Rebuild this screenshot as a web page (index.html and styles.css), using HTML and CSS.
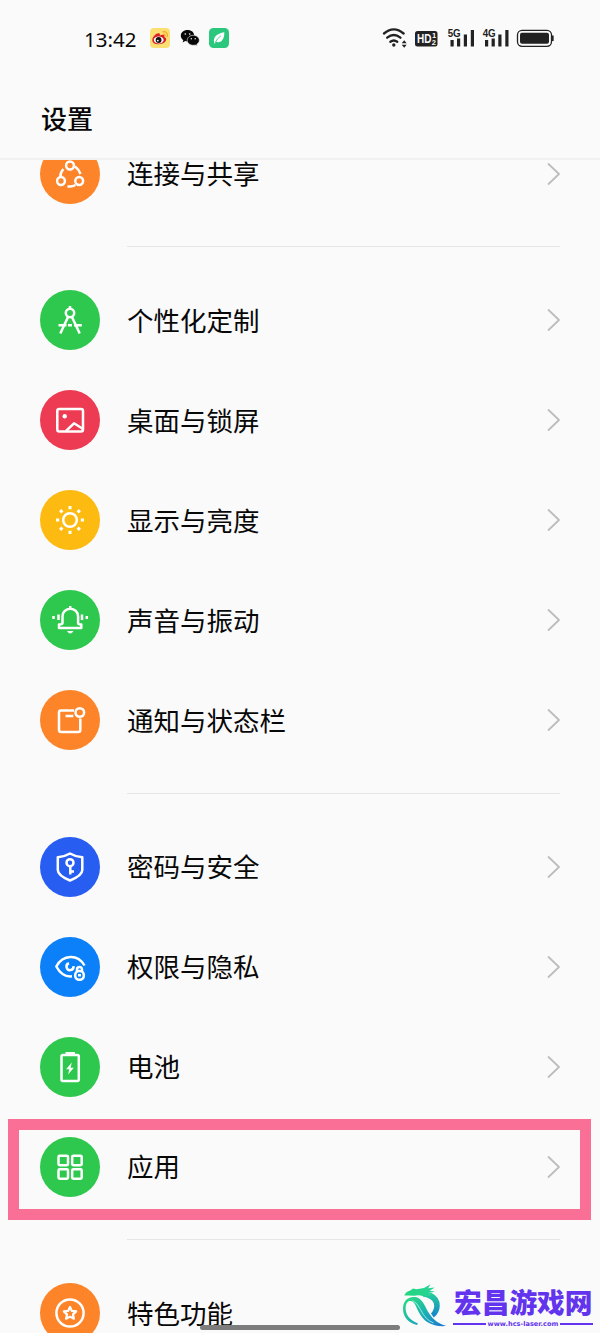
FILE: index.html
```html
<!DOCTYPE html>
<html lang="zh-CN">
<head>
<meta charset="utf-8">
<title>设置</title>
<link rel="stylesheet" href="styles.css">
</head>
<body>
<div class="phone">
  <header class="header">
    <div class="status">
      <span class="time">13:42</span>
      <svg class="app-weibo" width="20" height="20" viewBox="0 0 20 20">
        <rect width="20" height="20" rx="4" fill="#fcdf72"/>
        <path d="M2.300 12.100C2.500 8 7.500 4 9.500 5.600q.7.600.3 1.800c3-1.400 5.400-.6 4.500 1.700 2 .8 2.500 2.300 1.400 4-2.800 4.300-13.500 4.600-13.400-1z" fill="#d91f27"/>
        <ellipse cx="8.700" cy="12" rx="4.900" ry="3.400" fill="#fff"/>
        <circle cx="8.600" cy="12" r="2.900" fill="#111"/><circle cx="7.800" cy="12.600" r=".9" fill="#fff"/>
        <path d="M13 3.800c3-.6 5.300 1.900 4.300 4.800M13.400 6.200c1.300-.2 2.100.6 1.800 1.800" fill="none" stroke="#f5a832" stroke-width="1.200" stroke-linecap="round"/>
      </svg>
      <svg class="app-wechat" width="20" height="18" viewBox="0 0 20 18">
        <path d="M7.500 1C3.500 1 .8 3.500.8 6.700c0 1.900 1 3.400 2.500 4.500l-.7 2.200 2.600-1.300q1.200.4 2.600.3C11.500 12.400 14.200 10 14.200 6.700S11.500 1 7.500 1z" fill="#080808"/>
        <path d="M13.200 6.300c-3.300 0-6 2.200-6 5s2.700 5 6 5q1.100 0 2.100-.3l2 1.100-.5-1.900c1.500-.9 2.500-2.300 2.500-3.900 0-2.800-2.700-5-6.100-5z" fill="#080808" stroke="#fafafa" stroke-width=".6"/>
        <g fill="#fafafa"><circle cx="5.300" cy="5" r=".8"/><circle cx="9.700" cy="5" r=".8"/><circle cx="11.300" cy="9.800" r=".7"/><circle cx="15.200" cy="9.800" r=".7"/></g>
      </svg>
      <svg class="app-leaf" width="20" height="20" viewBox="0 0 20 20">
        <rect width="20" height="20" rx="4.500" fill="#2bc77d"/>
        <path d="M5.300 15C3.600 9.500 7.500 5.300 15.300 4.200c.3 6.300-2.700 11.500-8.600 9.500l-.9 2.400z" fill="#fff"/>
        <path d="M6.200 14.500Q8 10.500 12 7.700" stroke="#2bc77d" fill="none" stroke-width=".8"/>
      </svg>
      <svg class="system" width="175" height="24" viewBox="382 26 175 24">
        <g fill="none" stroke="#222" stroke-width="2.300" stroke-linecap="round">
          <path d="M384 33.500q9.800-8.300 19.600 0M387.200 37.700q6.600-5.300 13.200 0M390.400 41.700q3.400-2.500 6.800 0"/>
        </g>
        <circle cx="393.800" cy="45" r="1.700" fill="#222"/>
        <path d="M401.700 43.200l2.500-3 2.500 3zM401.700 44.700l2.500 3 2.500-3z" fill="#222"/>
        <rect x="415" y="31" width="22.500" height="15.500" rx="2.500" fill="#222"/>
        <text x="417" y="43" class="hd" textLength="14.500" lengthAdjust="spacingAndGlyphs">HD</text>
        <text x="432" y="38.300" class="hd-sub">1</text><text x="431.800" y="45.300" class="hd-sub">2</text>
        <text x="447.700" y="37.200" class="net" textLength="13" lengthAdjust="spacingAndGlyphs">5G</text>
        <text x="482.700" y="37.200" class="net" textLength="13" lengthAdjust="spacingAndGlyphs">4G</text>
        <path d="M450.500 40h3.200v6.500h-3.200zM457 38.500h3.200v8H457zM463.800 34.500h3.200v12h-3.200zM470.800 30h3.200v16.500h-3.200zM485 40h3.200v6.500H485zM491.600 38.500h3.200v8h-3.200zM498.300 34.500h3.200v12h-3.200zM505.300 30h3.200v16.500h-3.200z" fill="#222"/>
        <rect x="517.500" y="30.300" width="34" height="16" rx="4.500" fill="none" stroke="#222" stroke-width="1.300"/>
        <rect x="520" y="32.800" width="29" height="11" rx="2" fill="#222"/><path d="M552.800 35.500v5.500" stroke="#222" stroke-width="1.700"/>
      </svg>
    </div>
    <h1 class="title">设置</h1>
  </header>

  <main class="list">
    <div class="row">
      <span class="disc orange"><svg class="icon" viewBox="0 0 60 60"><circle cx="30" cy="21.500" r="3.900"/><circle cx="21" cy="37" r="3.900"/><circle cx="39.200" cy="37" r="3.900"/><path d="M35 22.500q4 3 5.500 7.500M23.400 25q-3.300 3.700-3 8M27.500 42.300q4.400 1 7.900-1.300"/></svg></span>
      <span class="label">连接与共享</span><svg class="chevron" viewBox="0 0 14 24"><path d="M1.500 2 12 12 1.500 22"/></svg>
    </div>
    <div class="divider"></div>
    <div class="row">
      <span class="disc green"><svg class="icon" viewBox="0 0 60 60"><circle cx="30" cy="23" r="4.200"/><path d="M30 16v2M28 27l-7.700 16.500M32 27l7.700 16.500M18.500 35.300h8M28 35.300h4M34 35.300h7.800"/></svg></span>
      <span class="label">个性化定制</span><svg class="chevron" viewBox="0 0 14 24"><path d="M1.500 2 12 12 1.500 22"/></svg>
    </div>
    <div class="row">
      <span class="disc red"><svg class="icon" viewBox="0 0 60 60"><rect x="17.300" y="19" width="25.700" height="22.500" rx="2"/><path d="M26 41l8-7.700 9 5.700"/><circle cx="24.700" cy="26.300" r="2.200" class="solid"/></svg></span>
      <span class="label">桌面与锁屏</span><svg class="chevron" viewBox="0 0 14 24"><path d="M1.500 2 12 12 1.500 22"/></svg>
    </div>
    <div class="row">
      <span class="disc yellow"><svg class="icon" viewBox="0 0 60 60"><circle cx="30" cy="30" r="6.800"/><path class="rays" d="M30 16v3.200M30 40.800V44M16 30h3.200M40.800 30H44M20.100 20.100l2.300 2.300M37.600 37.600l2.300 2.300M20.100 39.900l2.300-2.300M37.600 22.400l2.300-2.300"/></svg></span>
      <span class="label">显示与亮度</span><svg class="chevron" viewBox="0 0 14 24"><path d="M1.500 2 12 12 1.500 22"/></svg>
    </div>
    <div class="row">
      <span class="disc green"><svg class="icon" viewBox="0 0 60 60"><path d="M22.500 33v-6.500a7.800 7.800 0 0 1 15.600 0V33q0 1.400 3.200 1.600v3.400H19v-3.400q3.500-.2 3.500-1.600zM30.200 16v2M18.500 24.500v5.500M42 24.500v5.500M13.500 26v3M46.800 26v3"/><path class="solid" d="M27 41h6.500q-3.200 5-6.500 0z"/></svg></span>
      <span class="label">声音与振动</span><svg class="chevron" viewBox="0 0 14 24"><path d="M1.500 2 12 12 1.500 22"/></svg>
    </div>
    <div class="row">
      <span class="disc orange"><svg class="icon" viewBox="0 0 60 60"><path d="M34 20.500H21q-2 0-2 2v17.200q0 2.300 2.300 2.300h17q2 0 2-2V28.500M25.500 26h7.800"/><circle cx="39.800" cy="22.500" r="4.300"/></svg></span>
      <span class="label">通知与状态栏</span><svg class="chevron" viewBox="0 0 14 24"><path d="M1.500 2 12 12 1.500 22"/></svg>
    </div>
    <div class="divider"></div>
    <div class="row">
      <span class="disc indigo"><svg class="icon" viewBox="0 0 60 60"><path d="M30 16.500q6 3.500 12.300 3.700V33q0 5.500-12.300 10.500Q17.800 38.500 17.800 33V20.200Q24 20 30 16.500z"/><circle cx="30" cy="25.700" r="3.500"/><path d="M30.300 29.500v8M31 34.500h3"/></svg></span>
      <span class="label">密码与安全</span><svg class="chevron" viewBox="0 0 14 24"><path d="M1.500 2 12 12 1.500 22"/></svg>
    </div>
    <div class="row">
      <span class="disc blue"><svg class="icon" viewBox="0 0 60 60"><path d="M32 39.300C25 40 19.500 35.500 16.300 29.500 23 17 38 17 44.500 28.500M29 26.300a3.500 3.500 0 1 0 4.500 2.900"/><rect x="35.200" y="34" width="8.600" height="8.800" rx="4"/><path d="M37 34V32.500a2.500 2.500 0 0 1 5 0V34M38 38.200h3"/></svg></span>
      <span class="label">权限与隐私</span><svg class="chevron" viewBox="0 0 14 24"><path d="M1.500 2 12 12 1.500 22"/></svg>
    </div>
    <div class="row">
      <span class="disc green"><svg class="icon" viewBox="0 0 60 60"><rect x="21.500" y="18" width="17.300" height="26" rx="1.500"/><path d="M25.500 16.300h9.400"/><path class="bolt" d="M31.800 25.500l-5.700 6.700h3.200l-1.200 5.300 5.700-6.800h-3.200z"/></svg></span>
      <span class="label">电池</span><svg class="chevron" viewBox="0 0 14 24"><path d="M1.500 2 12 12 1.500 22"/></svg>
    </div>
    <div class="row">
      <span class="disc green"><svg class="icon" viewBox="0 0 60 60"><rect x="18.500" y="18.800" width="9.500" height="9.500" rx="1.200"/><rect x="32.200" y="18.800" width="9.500" height="9.500" rx="1.200"/><rect x="18.500" y="32.200" width="9.500" height="9.500" rx="1.200"/><rect x="32.200" y="32.200" width="9.500" height="9.500" rx="1.200"/></svg></span>
      <span class="label">应用</span><svg class="chevron" viewBox="0 0 14 24"><path d="M1.500 2 12 12 1.500 22"/></svg>
    </div>
    <div class="divider"></div>
    <div class="row last">
      <span class="disc orange"><svg class="icon" viewBox="0 0 60 60"><circle cx="30" cy="30" r="13.600"/><path class="star" d="M30 24l1.900 3.900 4.300.5-3.200 3 .9 4.300-3.900-2.100-3.900 2.100.9-4.300-3.200-3 4.300-.5z"/></svg></span>
      <span class="label">特色功能</span>
    </div>
  </main>

  <div class="highlight"></div>
  <div class="home-bar"></div>
  <div class="watermark">
    <svg class="dragon" width="46" height="46" viewBox="0 0 46 46">
      <defs>
        <linearGradient id="head" x1="0" y1="0" x2="1" y2="0"><stop offset="0" stop-color="#22d67c"/><stop offset="1" stop-color="#28d29a"/></linearGradient>
        <linearGradient id="ring" x1="0" y1="0" x2="0" y2="1"><stop offset="0" stop-color="#24cf98"/><stop offset="1" stop-color="#1580d0"/></linearGradient>
        <linearGradient id="band" x1="0" y1="0" x2="1" y2="1"><stop offset="0" stop-color="#2ee07c"/><stop offset=".5" stop-color="#1bb3b0"/><stop offset="1" stop-color="#1c74d4"/></linearGradient>
      </defs>
      <path fill="url(#ring)" d="M21 10.500l8.500-.5q8.500 4 8.300 13-.3 7-6 11.500l-2.800-4q4.500-5 2.700-10.500-2-5-10.700-6.500z"/>
      <path fill="url(#head)" d="M2.300 12.500q1.500-4 6-5l2.700-2 3.500.8L22 5l6.500-3.800-2.300 4 6.500-.7-5 3.200 5.500 1-7 1.300 5 2.300-9.500 1.200q-5-2-9.200-.7l-6-.3z"/>
      <path fill="url(#band)" d="M14.500 14.200C5 13 1 18.500 1 26c0 8 5.500 14 14 16l1-1.500C7 37 3 30.500 3.700 24c.4-3.500 2-6 4.300-6 5 0 6 6 9 11.500C22 39 30 44 44.500 43 35.500 40.500 31 36 27.500 31 23.500 25 21 16 14.500 14.200z"/>
      <path d="M10.500 17.500q5 2.500 8 9 5 10.500 13 13.500" fill="none" stroke="#c9fff0" stroke-width=".7"/>
    </svg>
    <div class="brand">
      <span class="brand-name">宏昌游戏网</span>
      <span class="brand-url">www.hcs-laser.com</span>
    </div>
  </div>
</div>
</body>
</html>
```
FILE: styles.css
```css
* { box-sizing: border-box; }
body { margin: 0; background: #fafafa; }
.phone {
  position: relative;
  display: flex;
  flex-direction: column;
  width: 600px;
  height: 1333px;
  overflow: hidden;
  background: #fafafa;
  color: #080808;
  font-family: "Noto Sans", "Noto Sans CJK SC", sans-serif;
}
.header {
  flex: none;
  height: 160px;
  border-bottom: 2px solid #f1f1f1;
}
.status {
  display: flex;
  align-items: center;
  height: 76px;
  padding-left: 84px;
}
.time { width: 66px; padding-top: 1px; font-size: 20.500px; line-height: 24px; }
.app-wechat { margin-left: 10px; }
.app-leaf { margin-left: 9px; }
.system { margin-left: 153px; }
.hd { font: bold 12px "Liberation Sans", sans-serif; fill: #fafafa; }
.hd-sub { font: bold 7.500px "Liberation Sans", sans-serif; fill: #fafafa; }
.net { font: bold 11px "Liberation Sans", sans-serif; fill: #222; }
.title {
  margin: 23px 0 0 41px;
  font-family: "Noto Sans CJK SC", sans-serif;
  font-size: 26px;
  font-weight: 500;
  line-height: 38px;
}
.list { flex: 1; min-height: 0; overflow: hidden; display: flex; flex-direction: column; }
.row {
  flex: none;
  display: flex;
  align-items: center;
  height: 100px;
  padding: 0 39px 0 40px;
}
.row:first-child { margin-top: -36.400px; }
.disc { width: 60px; height: 60px; border-radius: 50%; }
.orange { background: #fd8428; }
.green { background: #2dc84d; }
.red { background: #ec3b52; }
.yellow { background: #fdba10; }
.indigo { background: #285df2; }
.blue { background: #0c80f8; }
.icon {
  display: block;
  width: 60px;
  height: 60px;
  fill: none;
  stroke: #fff;
  stroke-width: 2.500;
  stroke-linejoin: round;
}
.icon .solid, .icon .bolt { fill: #fff; stroke: none; }
.icon .rays { stroke-width: 3; }
.icon .star { stroke-width: 2.200; }
.label {
  flex: 1;
  margin-left: 27px;
  padding-bottom: 1px;
  font-family: "Noto Sans CJK SC", sans-serif;
  font-size: 26.500px;
  line-height: 38px;
}
.chevron {
  width: 14px;
  height: 24px;
  fill: none;
  stroke: #bdbdbd;
  stroke-width: 1.800;
  stroke-linecap: round;
  stroke-linejoin: round;
}
.divider {
  flex: none;
  height: 1px;
  margin: 22.600px 40px 23px 127px;
  background: #e6e6e6;
}
.highlight {
  position: absolute;
  left: 8px;
  top: 1119px;
  width: 583px;
  height: 101px;
  border: 11px solid #f96f96;
}
.home-bar {
  position: absolute;
  left: 200px;
  top: 1325px;
  width: 200px;
  height: 5px;
  border-radius: 3px;
  background: #7d7d7d;
}
.watermark {
  position: absolute;
  left: 402px;
  top: 1283px;
  display: flex;
}
.brand { display: flex; flex-direction: column; margin-left: 5px; width: 140px; }
.brand-name {
  height: 36px;
  margin-left: 1px;
  font-family: "Noto Sans CJK SC", sans-serif;
  font-size: 27.700px;
  font-weight: 900;
  line-height: 36px;
  white-space: nowrap;
  color: #6334ee;
}
.brand-url {
  display: flex;
  align-items: center;
  gap: 2px;
  height: 10px;
  font: bold 6.600px/10px "DejaVu Sans", sans-serif;
  white-space: nowrap;
  color: #6334ee;
}
.brand-url::before, .brand-url::after { content: ""; flex: 1; height: 1.500px; background: #6334ee; }
```
